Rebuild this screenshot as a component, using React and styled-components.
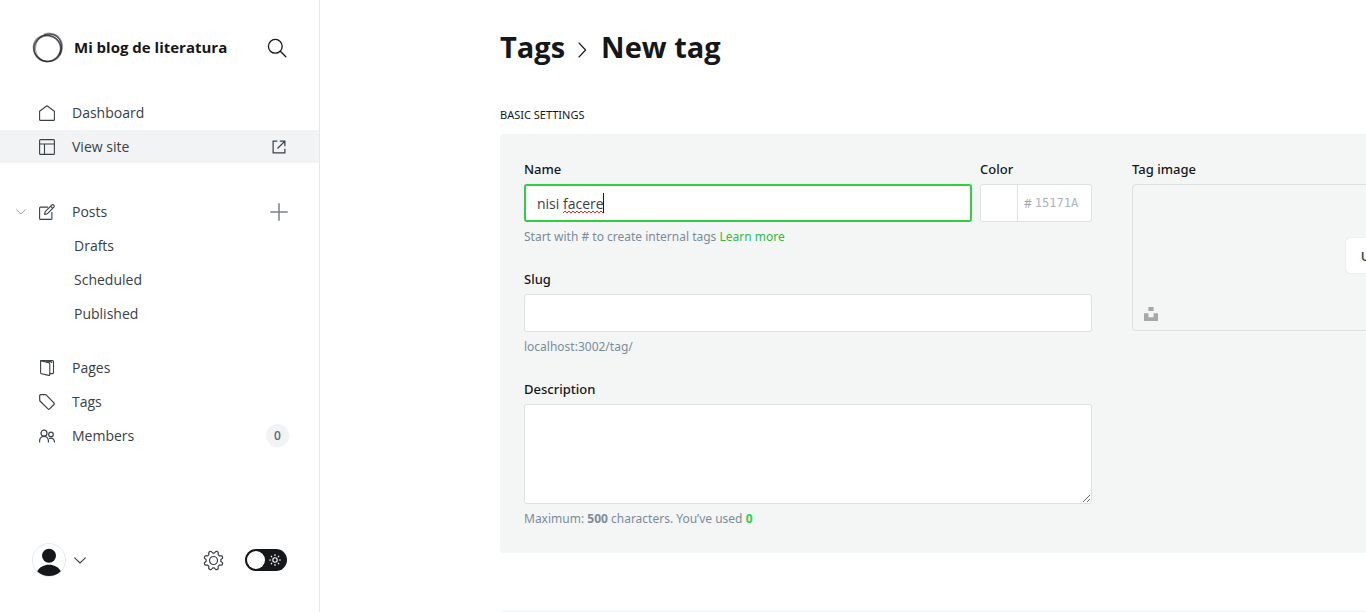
import React, { useState } from "react";
import styled, { createGlobalStyle, css } from "styled-components";

const GlobalStyle = createGlobalStyle`
  *, *::before, *::after { box-sizing: border-box; }
  html, body { margin: 0; background: #fff; }
  body {
    font-family: "Open Sans", "Noto Sans", "Liberation Sans", sans-serif;
    font-size: 14px;
    color: #15171a;
    overflow: hidden;
  }
  button, input, textarea { font: inherit; color: inherit; }
  ul { list-style: none; margin: 0; padding: 0; }
  a { color: inherit; text-decoration: none; }
`;

const noto = `"Noto Sans", "Open Sans", "Liberation Sans", sans-serif`;

const Shell = styled.div`
  display: flex;
  height: 100vh;
`;

/* Sidebar */

const Sidebar = styled.aside`
  flex: 0 0 320px;
  display: flex;
  flex-direction: column;
  border-right: 1px solid #e5e9ed;
`;

const SiteHeader = styled.header`
  display: flex;
  align-items: center;
  height: 96px;
  padding: 0 32px;
  gap: 10px;
`;

const SiteName = styled.div`
  flex: 1;
  padding-bottom: 2px;
  font-size: 15px;
  font-weight: 700;
  white-space: nowrap;
`;

const IconButton = styled.button`
  display: flex;
  align-items: center;
  justify-content: center;
  padding: 0;
  border: 0;
  background: none;
  color: ${(p) => p.$color || "#394047"};
  cursor: pointer;
`;

const RowAction = styled(IconButton)`
  width: 20px;
`;

const Nav = styled.nav`
  flex: 1;
`;

const NavList = styled.ul`
  display: flex;
  flex-direction: column;
  gap: 1px;
  margin-bottom: ${(p) => p.$space || 0}px;
`;

const NavItem = styled.li`
  display: flex;
  align-items: center;
  height: 33px;
  padding: 0 30px 0 ${(p) => (p.$nested ? 74 : 16)}px;
  background: ${(p) => (p.$active ? "#f1f3f4" : "transparent")};
  color: #394047;
`;

const Expander = styled.span`
  display: flex;
  flex: 0 0 23px;
`;

const NavLink = styled.a`
  flex: 1;
  display: flex;
  align-items: center;
  gap: 17px;
  font-size: 14px;
`;

const Badge = styled.span`
  width: 23px;
  height: 23px;
  border-radius: 50%;
  background: #f1f3f4;
  font-size: 12px;
  font-weight: 600;
  line-height: 23px;
  text-align: center;
  color: #5d6770;
`;

const SidebarFooter = styled.footer`
  display: flex;
  align-items: center;
  padding: 0 32px 35px;
  gap: 21px;
`;

const UserMenu = styled(IconButton)`
  gap: 8px;
  margin-right: auto;
`;

const Switch = styled.label`
  display: flex;
  align-items: center;
  justify-content: space-between;
  width: 42px;
  height: 22px;
  padding: 0 6px 0 2px;
  border-radius: 11px;
  background: #15171a;
  color: #fff;
  cursor: pointer;
`;

const SwitchInput = styled.input`
  appearance: none;
  width: 18px;
  height: 18px;
  margin: 0;
  border-radius: 50%;
  background: #fff;
`;

/* Main area */

const Main = styled.main`
  flex: 1;
  min-width: 0;
  overflow: hidden;
  padding-left: 180px;
`;

const Canvas = styled.div`
  min-width: 1200px;
`;

const Title = styled.h1`
  display: flex;
  align-items: center;
  gap: 12px;
  height: 96px;
  margin: 0;
  padding-bottom: 4px;
  font-size: 29px;
  font-weight: 700;
`;

const SectionTitle = styled.h2`
  margin: 8px 0 0;
  padding-bottom: 8px;
  font-family: ${noto};
  font-size: 11px;
  font-weight: 400;
  line-height: 22px;
  text-transform: uppercase;
`;

const Panel = styled.section`
  display: grid;
  grid-template-columns: 568px 1fr;
  gap: 40px;
  padding: 24px 24px 25px;
  border-radius: 4px;
  background: #f4f6f6;
`;

const NextPanel = styled.section`
  height: 80px;
  margin-top: 58px;
  border: 1px solid #f0f2f3;
  border-radius: 4px;
`;

const Fields = styled.div`
  display: flex;
  flex-direction: column;
  gap: 22px;
`;

const FieldRow = styled.div`
  display: grid;
  grid-template-columns: 1fr 112px;
  gap: 8px;
`;

const Field = styled.div`
  display: flex;
  flex-direction: column;
`;

const labelText = css`
  margin-bottom: 4px;
  font-family: ${noto};
  font-size: 13px;
  font-weight: 500;
  line-height: 22px;
`;

const Label = styled.label`
  ${labelText}
`;

const FieldTitle = styled.div`
  ${labelText}
`;

const Hint = styled.p`
  margin: 6px 0 0;
  font-family: ${noto};
  font-size: 12px;
  line-height: 18px;
  color: #7c8b9a;
  strong { font-weight: 700; }
`;

const HintLink = styled.a`
  color: #30b943;
`;

const Count = styled.strong`
  color: #30cf43;
`;

const control = css`
  display: block;
  width: 100%;
  border: 1px solid #dde1e1;
  border-radius: 3px;
  background: #fff;
  outline: none;
`;

const TextInput = styled.input`
  ${control}
  height: 38px;
  padding: 0 12px;
  font-size: 14px;
  color: #394047;
  ${(p) =>
    p.$focused &&
    css`
      border: 2px solid #30cf43;
      padding: 0 11px;
      caret-color: transparent;
    `}
`;

const TextArea = styled.textarea`
  ${control}
  height: 100px;
  padding: 8px 12px;
  resize: vertical;
`;

const Typing = styled.div`
  position: relative;
`;

const SpellMark = styled.svg`
  position: absolute;
  left: 39px;
  top: 26px;
`;

const Caret = styled.span`
  position: absolute;
  left: 79px;
  top: 9px;
  width: 1px;
  height: 20px;
  background: #15171a;
`;

const ColorBox = styled.div`
  ${control}
  display: flex;
  align-items: center;
  height: 38px;
`;

const Swatch = styled.button`
  flex: 0 0 37px;
  align-self: stretch;
  border: 0;
  border-right: 1px solid #dde1e1;
  border-radius: 3px 0 0 3px;
  background: #fff;
`;

const Hash = styled.span`
  padding: 0 3px 0 6px;
  font-size: 12px;
  color: #9aa4af;
`;

const HexInput = styled.input`
  flex: 1;
  min-width: 0;
  padding: 0;
  border: 0;
  outline: none;
  background: none;
  font-family: "DejaVu Sans Mono", monospace;
  font-size: 12px;
  &::placeholder { color: #abb4be; opacity: 1; }
`;

const Uploader = styled.div`
  position: relative;
  display: flex;
  align-items: center;
  justify-content: center;
  height: 147px;
  padding-bottom: 4px;
  border: 1px solid #dde1e1;
  border-radius: 4px;
`;

const UploadButton = styled.button`
  height: 35px;
  padding: 0 15px;
  border: 0;
  border-radius: 4px;
  background: #fff;
  box-shadow: 0 0 1px rgba(21, 23, 26, 0.25);
  font-size: 13px;
  font-weight: 600;
  color: #394047;
`;

const UnsplashButton = styled(IconButton)`
  position: absolute;
  left: 11px;
  bottom: 9px;
`;

/* Icons */

const Icon = ({ size = 16, box = 16, sw = 1, children }) => (
  <svg width={size} height={size} viewBox={`0 0 ${box} ${box}`} fill="none" stroke="currentColor" strokeWidth={sw} strokeLinecap="round" strokeLinejoin="round" aria-hidden="true">
    {children}
  </svg>
);

const Logo = () => (
  <svg width="32" height="32" viewBox="0 0 32 32" fill="none" stroke="#15171a" aria-hidden="true">
    <ellipse cx="15.200" cy="16.600" rx="13.400" ry="13" strokeWidth="1.600" opacity="0.6" />
    <ellipse cx="16.200" cy="15.800" rx="14.200" ry="12.800" strokeWidth="1.100" opacity="0.45" transform="rotate(-48 16 16)" />
    <ellipse cx="15.600" cy="16.600" rx="14.400" ry="12.800" strokeWidth="1.100" opacity="0.45" transform="rotate(28 16 16)" />
    <ellipse cx="16.600" cy="15.400" rx="13" ry="14" strokeWidth="1" opacity="0.4" transform="rotate(18 16 16)" />
    <path d="M12 2.600C18 .6 25.500 2 28.500 8.500c2.200 5 1.600 10.500-1.200 14.500" strokeWidth="2.400" opacity="0.35" />
  </svg>
);

const SearchIcon = () => (
  <Icon size={20} box={20} sw={1.3}>
    <circle cx="8.3" cy="8.3" r="6.9" />
    <path d="M13.3 13.3 18.8 18.7" />
  </Icon>
);
const HomeIcon = () => (
  <Icon sw={1.1}>
    <path d="M.6 6.3 8 .7l7.4 5.6v8.1q0 1-1 1H1.6q-1 0-1-1z" />
  </Icon>
);
const LayoutIcon = () => (
  <Icon sw={1.1}>
    <rect x=".6" y=".6" width="14.8" height="14.8" rx="1" />
    <path d="M.6 5h14.8M5.5 5v10.4" />
  </Icon>
);
const ExternalIcon = () => (
  <Icon size={14} box={15} sw={1.3}>
    <path d="M5 1.200H1.200v12.600h12.600V10M9 1.200h4.800v4.800M13.400 1.600 6.300 8.700" strokeLinecap="square" strokeLinejoin="miter" />
  </Icon>
);
const ChevronIcon = ({ w = 10, sw = 1.2 }) => (
  <svg width={w} height={w / 2 + 1} viewBox="0 0 12 7" fill="none" stroke="currentColor" strokeWidth={sw} strokeLinecap="round" strokeLinejoin="round" aria-hidden="true">
    <path d="M.7 .8 6 6 11.3 .8" />
  </svg>
);
const EditIcon = () => (
  <Icon sw={1.1}>
    <path d="M8.6 3.1H1.6q-1 0-1 1v10.3q0 1 1 1h10.3q1 0 1-1V8.2" />
    <path d="m5.6 10.4.6-2.7 6.4-6.5a1.4 1.4 0 0 1 2.1 2.1L8.2 9.8zM11.6 2.2l2.1 2.1" />
  </Icon>
);
const PlusIcon = () => (
  <Icon size={18} box={18} sw={1.5}>
    <path d="M9 .8v16.4M.8 9h16.4" />
  </Icon>
);
const PagesIcon = () => (
  <Icon sw={1.1}>
    <path d="M1.600.8 9.700 2.600q1.100.3 1.100 1.300v10.700q0 1-1 .8L2.600 13.800q-1-.2-1-1.200z" />
    <path d="M1.600.8q.2-.2.700-.2h11.200q1 0 1 1v11q0 1-1 1h-2.700M7.600 2.100l3.600-.4q1.300-.1 1.600.8" />
  </Icon>
);
const TagIcon = () => (
  <Icon sw={1.2}>
    <path d="M.7 1.700q0-1 1-1h4.500q.7 0 1.200.5l7.500 7.700q.8.8 0 1.600l-4.300 4.400q-.8.8-1.600 0L1.200 7.200Q.7 6.700.7 6z" />
  </Icon>
);
const MembersIcon = () => (
  <Icon sw={1.2}>
    <circle cx="5" cy="5.2" r="3" />
    <path d="M.6 14v-1.200a4.400 4.400 0 0 1 8.800 0V14" />
    <circle cx="12" cy="6.400" r="2.300" />
    <path d="M10.600 10.400a3.500 3.500 0 0 1 4.800 3.200v.4" />
  </Icon>
);
const AvatarIcon = () => (
  <svg width="34" height="34" viewBox="0 0 34 34" aria-hidden="true">
    <circle cx="17" cy="17" r="16.500" fill="#fff" stroke="#e5e9ed" />
    <circle cx="17" cy="12.800" r="7" fill="#15171a" />
    <path d="M5.200 28.200C7.500 24 12 21.800 17 21.800s9.500 2.200 11.800 6.400C26 31.400 21.800 33 17 33S8 31.400 5.200 28.200z" fill="#15171a" />
  </svg>
);

const gearPath = (() => {
  const pts = [];
  for (let i = 0; i < 96; i += 1) {
    const a = (i / 96) * Math.PI * 2;
    const wave = Math.cos(a * 8 + Math.PI);
    const r = 8.5 + 1.15 * Math.tanh(wave * 2.2);
    pts.push(`${(10.5 + r * Math.cos(a)).toFixed(2)} ${(10.5 + r * Math.sin(a)).toFixed(2)}`);
  }
  return `M${pts.join("L")}z`;
})();
const GearIcon = () => (
  <Icon size={21} box={21} sw={1.2}>
    <path d={gearPath} />
    <circle cx="10.5" cy="10.5" r="4" />
  </Icon>
);
const SunIcon = () => (
  <Icon size={12} box={12} sw={1.1}>
    <circle cx="6" cy="6" r="2.200" />
    <path d="M6 .6v1M6 10.400v1M.6 6h1M10.400 6h1M2.200 2.200l.6.6M9.200 9.200l.6.6M2.200 9.800l.6-.6M9.200 2.800l.6-.6" />
  </Icon>
);
const UnsplashIcon = () => (
  <svg width="14" height="14" viewBox="0 0 14 14" fill="#a5a8a7" aria-hidden="true">
    <path d="M4.400 0h5.200v4H4.400zM0 6.200h4.400v4h5.200v-4H14V14H0z" />
  </svg>
);
const Crumb = () => (
  <svg width="12" height="24" viewBox="0 0 12 24" fill="none" stroke="#15171a" strokeWidth="1.1" strokeLinecap="round" strokeLinejoin="round" aria-hidden="true">
    <path d="M2 9 8.600 16 2 23" />
  </svg>
);

export default function App() {
  const [name, setName] = useState("nisi facere");
  return (
    <>
      <GlobalStyle />
      <Shell>
        <Sidebar>
          <SiteHeader>
            <Logo />
            <SiteName>Mi blog de literatura</SiteName>
            <IconButton aria-label="Search" $color="#15171a">
              <SearchIcon />
            </IconButton>
          </SiteHeader>
          <Nav>
            <NavList $space={32}>
              <NavItem>
                <Expander />
                <NavLink href="#dashboard"><HomeIcon />Dashboard</NavLink>
              </NavItem>
              <NavItem $active>
                <Expander />
                <NavLink href="#site"><LayoutIcon />View site</NavLink>
                <RowAction aria-label="Open site in new tab"><ExternalIcon /></RowAction>
              </NavItem>
            </NavList>
            <NavList $space={21}>
              <NavItem>
                <Expander>
                  <IconButton aria-label="Collapse posts" $color="#9aa4af"><ChevronIcon /></IconButton>
                </Expander>
                <NavLink href="#posts"><EditIcon />Posts</NavLink>
                <RowAction aria-label="New post" $color="#7c8087"><PlusIcon /></RowAction>
              </NavItem>
              <NavItem $nested><NavLink href="#drafts">Drafts</NavLink></NavItem>
              <NavItem $nested><NavLink href="#scheduled">Scheduled</NavLink></NavItem>
              <NavItem $nested><NavLink href="#published">Published</NavLink></NavItem>
            </NavList>
            <NavList>
              <NavItem>
                <Expander />
                <NavLink href="#pages"><PagesIcon />Pages</NavLink>
              </NavItem>
              <NavItem>
                <Expander />
                <NavLink href="#tags"><TagIcon />Tags</NavLink>
              </NavItem>
              <NavItem>
                <Expander />
                <NavLink href="#members"><MembersIcon />Members</NavLink>
                <Badge>0</Badge>
              </NavItem>
            </NavList>
          </Nav>
          <SidebarFooter>
            <UserMenu aria-label="Account menu">
              <AvatarIcon />
              <ChevronIcon w={12} sw={1.1} />
            </UserMenu>
            <IconButton aria-label="Settings"><GearIcon /></IconButton>
            <Switch>
              <SwitchInput type="checkbox" role="switch" aria-label="Night shift" />
              <SunIcon />
            </Switch>
          </SidebarFooter>
        </Sidebar>
        <Main>
          <Canvas>
            <Title>
              <a href="#tags">Tags</a>
              <Crumb />
              <span>New tag</span>
            </Title>
            <SectionTitle>Basic settings</SectionTitle>
            <Panel>
              <Fields>
                <FieldRow>
                  <Field>
                    <Label htmlFor="tag-name">Name</Label>
                    <Typing>
                      <TextInput id="tag-name" $focused value={name} onChange={(e) => setName(e.target.value)} />
                      <SpellMark width="41" height="4" viewBox="0 0 41 4" fill="none" stroke="#f02525" aria-hidden="true">
                        <path d="M0 3l2-2 2 2 2-2 2 2 2-2 2 2 2-2 2 2 2-2 2 2 2-2 2 2 2-2 2 2 2-2 2 2 2-2 2 2 2-2 2 2" />
                      </SpellMark>
                      <Caret />
                    </Typing>
                    <Hint>
                      Start with # to create internal tags <HintLink href="#learn">Learn more</HintLink>
                    </Hint>
                  </Field>
                  <Field>
                    <Label htmlFor="tag-color">Color</Label>
                    <ColorBox>
                      <Swatch aria-label="Pick a color" />
                      <Hash>#</Hash>
                      <HexInput id="tag-color" placeholder="15171A" />
                    </ColorBox>
                  </Field>
                </FieldRow>
                <Field>
                  <Label htmlFor="tag-slug">Slug</Label>
                  <TextInput id="tag-slug" />
                  <Hint>localhost:3002/tag/</Hint>
                </Field>
                <Field>
                  <Label htmlFor="tag-description">Description</Label>
                  <TextArea id="tag-description" />
                  <Hint>
                    Maximum: <strong>500</strong> characters. You’ve used <Count>0</Count>
                  </Hint>
                </Field>
              </Fields>
              <Field>
                <FieldTitle>Tag image</FieldTitle>
                <Uploader>
                  <UploadButton>Upload image</UploadButton>
                  <UnsplashButton aria-label="Choose from Unsplash"><UnsplashIcon /></UnsplashButton>
                </Uploader>
              </Field>
            </Panel>
            <NextPanel />
          </Canvas>
        </Main>
      </Shell>
    </>
  );
}
